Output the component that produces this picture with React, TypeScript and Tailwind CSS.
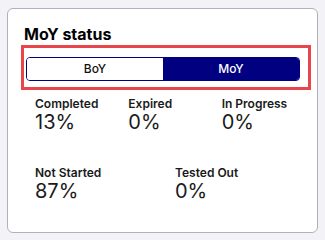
import React from "react";

const Stat = ({ label, value }: { label: string; value: string }) => (
  <div className="flex flex-col">
    <div className="text-[12px] leading-[16px] font-semibold text-[#1a1a1a]">{label}</div>
    <div className="text-[20px] leading-[21px] font-normal text-[#1a1a1a]">{value}</div>
  </div>
);

export default function App() {
  return (
    <div
      className="w-[325px] h-[240px] bg-[#f3f3f7] pt-[8px] pl-[7px]"
      style={{ fontFamily: "Inter, 'Noto Sans', sans-serif" }}
    >
      <div className="w-[311px] h-[225px] box-border bg-white border border-[#b0b0bf] rounded-[6px] flex flex-col">
        <div className="pl-[16px] pt-[14px] text-[16px] leading-[22px] font-bold text-black">MoY status</div>
        <div className="ml-[13px] mr-[6px] border-[3px] border-[#e8464b] pl-[2px] pr-[8px] pt-[9px] pb-[6px]">
          <div className="flex h-[24px] border border-[#000080] rounded-[4px] overflow-hidden">
            <button className="flex-1 bg-white text-[#111111] text-[12px] font-medium flex items-center justify-center">
              BoY
            </button>
            <button className="flex-1 bg-[#000080] text-white text-[12px] font-medium flex items-center justify-center">
              MoY
            </button>
          </div>
        </div>
        <div className="ml-[27px] w-[280px] mt-[6px] flex flex-col gap-[32px]">
          <div className="grid grid-cols-3">
            <Stat label="Completed" value="13%" />
            <Stat label="Expired" value="0%" />
            <Stat label="In Progress" value="0%" />
          </div>
          <div className="grid grid-cols-2">
            <Stat label="Not Started" value="87%" />
            <Stat label="Tested Out" value="0%" />
          </div>
        </div>
      </div>
    </div>
  );
}
